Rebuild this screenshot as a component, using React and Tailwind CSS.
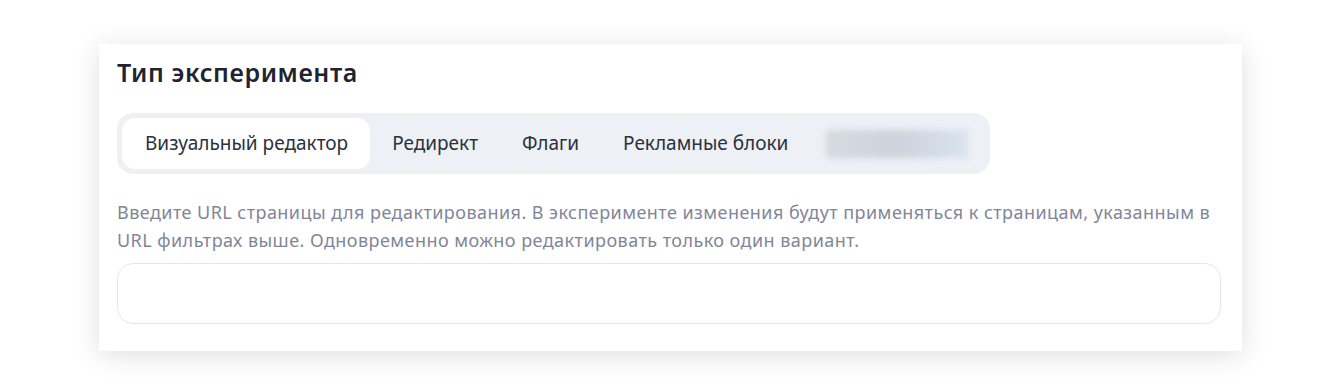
const tabs = ['Визуальный редактор', 'Редирект', 'Флаги', 'Рекламные блоки'];

export default function App() {
  return (
    <div className="min-h-[384px] bg-white pt-[44px] pl-[99px]" style={{ fontFamily: '"Noto Sans", "Open Sans", sans-serif' }}>
      <div className="w-[1143px] bg-white px-[18px] pt-[12px] pb-[27px] shadow-[0_4px_26px_rgba(0,0,0,0.13)]">
        {/* Title */}
        <h2 className="text-[25px] leading-[32px] font-semibold tracking-[0.6px] text-[#1f2430]">Тип эксперимента</h2>

        {/* Tabs */}
        <div className="mt-[25px] inline-flex items-center rounded-[16px] bg-[#edf0f5] p-[5px]">
          {tabs.map((t, i) => (
            <div
              key={t}
              className={`h-[51px] flex items-center rounded-[13px] text-[19px] text-[#2a3140] ${
                i === 0 ? 'bg-white pl-[23px] pr-[22px]' : 'px-[22px]'
              }`}
            >
              {t}
            </div>
          ))}
          <div className="ml-[16px] mr-[17px] h-[28px] w-[142px] rounded-[2px] bg-gradient-to-r from-[#d5dae2] via-[#cdd2db] to-[#d9e3ef] blur-[3px]" />
        </div>

        {/* Description */}
        <p className="mt-[24px] text-[18px] leading-[28px] tracking-[0.45px] whitespace-nowrap text-[#7f8698]">
          Введите URL страницы для редактирования. В эксперименте изменения будут применяться к страницам, указанным в
          <br />
          URL фильтрах выше. Одновременно можно редактировать только один вариант.
        </p>

        {/* Input */}
        <div className="mt-[9px] h-[61px] w-[1104px] rounded-[16px] border border-[#e4e7ef] bg-white" />
      </div>
    </div>
  );
}
